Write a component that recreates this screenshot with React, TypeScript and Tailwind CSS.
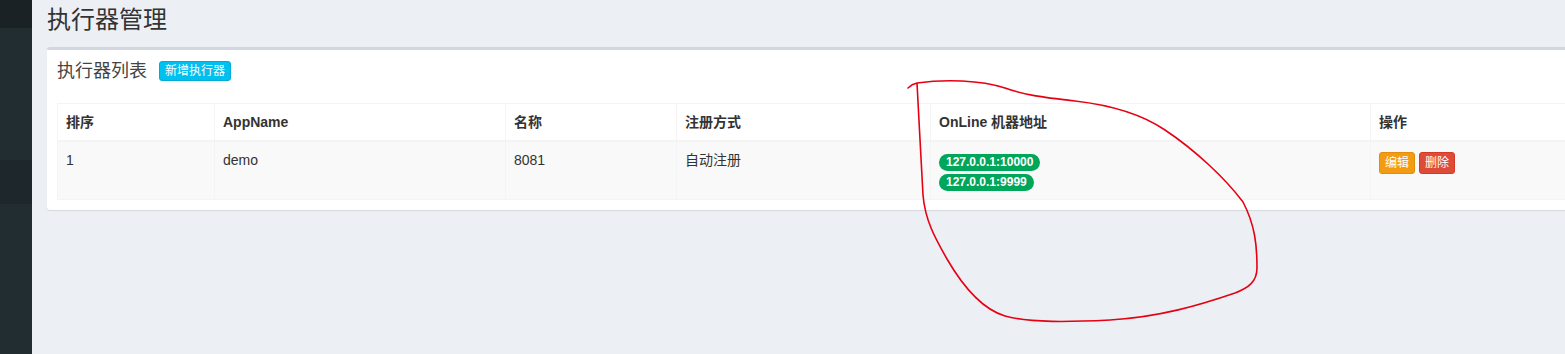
import React from "react";

const font = "font-['Liberation_Sans','Noto_Sans_CJK_SC',sans-serif]";

const columns = [
  { title: "排序", width: 157 },
  { title: "AppName", width: 291 },
  { title: "名称", width: 171 },
  { title: "注册方式", width: 254 },
  { title: "OnLine 机器地址", width: 440 },
  { title: "操作", width: 227 },
];

const executors = [
  {
    order: 1,
    appName: "demo",
    title: "8081",
    addressType: "自动注册",
    registryList: ["127.0.0.1:10000", "127.0.0.1:9999"],
  },
];

const App = () => {
  return (
    <div className={`relative flex w-[1565px] h-[354px] overflow-hidden bg-[#ecf0f5] text-[#333] ${font}`}>
      {/* sidebar (collapsed, only a strip visible) */}
      <div className="w-[32px] shrink-0 flex flex-col bg-[#222d32]">
        <div className="h-[28px] bg-[#1a2226]" />
        <div className="h-[132px]" />
        <div className="h-[44px] bg-[#1e282c]" />
      </div>

      {/* content */}
      <div className="flex-1 pl-[15px]">
        <h1 className="pt-[7px] text-[24px] leading-[26px] font-normal text-[#333]">执行器管理</h1>

        <div className="mt-[14px] w-[1560px] bg-white rounded-[3px] border-t-[3px] border-[#d2d6de] shadow-[0_1px_1px_rgba(0,0,0,0.1)]">
          {/* box header */}
          <div className="flex items-center gap-[12px] px-[10px] pt-[10px] pb-[10px] h-[42px]">
            <h3 className="text-[18px] leading-[20px] text-[#444]">执行器列表</h3>
            <button className="h-[20px] px-[5px] text-[12px] leading-[18px] text-white bg-[#00c0ef] border border-[#00acd6] rounded-[3px]">
              新增执行器
            </button>
          </div>

          {/* box body */}
          <div className="p-[10px] pt-[11px]">
            <table className="table-fixed border-collapse w-[1540px] text-[14px]">
              <colgroup>
                {columns.map((c) => (
                  <col key={c.title} style={{ width: c.width }} />
                ))}
              </colgroup>
              <thead>
                <tr className="h-[37px]">
                  {columns.map((c) => (
                    <th
                      key={c.title}
                      className="border border-[#f4f4f4] border-b-2 px-[8px] text-left align-middle font-bold leading-[20px] text-[#333]"
                    >
                      {c.title}
                    </th>
                  ))}
                </tr>
              </thead>
              <tbody>
                {executors.map((e) => (
                  <tr key={e.order} className="h-[59px] bg-[#f9f9f9] align-top">
                    <td className="border border-[#f4f4f4] px-[8px] py-[8px] leading-[20px]">{e.order}</td>
                    <td className="border border-[#f4f4f4] px-[8px] py-[8px] leading-[20px]">{e.appName}</td>
                    <td className="border border-[#f4f4f4] px-[8px] py-[8px] leading-[20px]">{e.title}</td>
                    <td className="border border-[#f4f4f4] px-[8px] py-[8px] leading-[20px]">{e.addressType}</td>
                    <td className="border border-[#f4f4f4] px-[8px] py-[8px]">
                      <div className="flex flex-col items-start gap-[3px] pt-[4px]">
                        {e.registryList.map((addr) => (
                          <span
                            key={addr}
                            className="h-[17px] px-[7px] rounded-full bg-[#00a65a] text-white text-[12px] font-bold leading-[17px]"
                          >
                            {addr}
                          </span>
                        ))}
                      </div>
                    </td>
                    <td className="border border-[#f4f4f4] px-[8px] py-[8px]">
                      <div className="flex gap-[4px] pt-[2px]">
                        <button className="h-[22px] px-[5px] text-[12px] leading-[18px] text-white bg-[#f39c12] border border-[#e08e0b] rounded-[3px]">
                          编辑
                        </button>
                        <button className="h-[22px] px-[5px] text-[12px] leading-[18px] text-white bg-[#dd4b39] border border-[#d73925] rounded-[3px]">
                          删除
                        </button>
                      </div>
                    </td>
                  </tr>
                ))}
              </tbody>
            </table>
          </div>
        </div>
      </div>

      {/* hand-drawn red annotation over the screenshot */}
      <svg
        className="absolute left-0 top-0 pointer-events-none"
        width="1565"
        height="354"
        viewBox="0 0 1565 354"
        fill="none"
      >
        <path
          d="M908,88 Q912,84 917,83 C945,79 980,80 1005,88 C1025,95 1040,97 1075,101 C1110,105 1140,113 1165,130 C1195,150 1225,178 1243,202 C1255,225 1257,245 1257,268 C1257,282 1248,288 1235,293 C1200,305 1160,317 1110,320 C1070,322 1030,323 1005,316 C985,310 965,290 947,259 C935,238 925,220 923,195 C921,160 919,120 917,83"
          stroke="#e60012"
          strokeWidth="1.6"
          strokeLinecap="round"
          strokeLinejoin="round"
        />
      </svg>
    </div>
  );
};

export default App;
